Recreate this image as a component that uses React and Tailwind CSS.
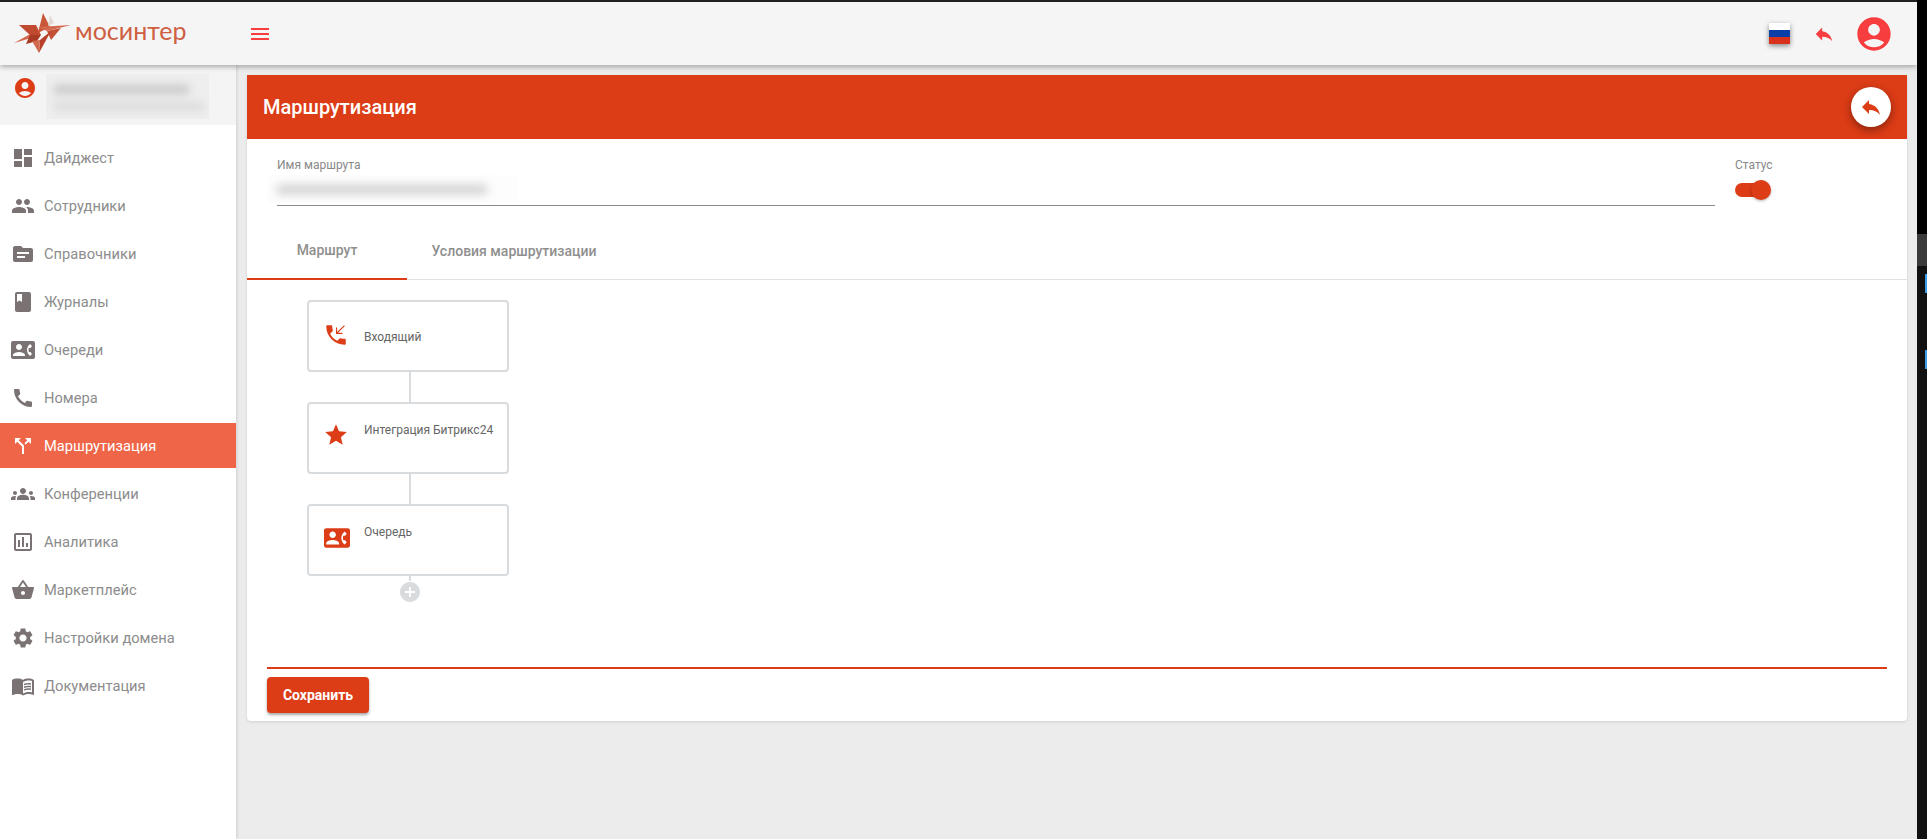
import React from "react";
import {
  MdDashboard, MdPeople, MdTopic, MdBook, MdContactPhone, MdCall, MdCallSplit, MdGroups,
  MdOutlineAssessment, MdShoppingBasket, MdSettings, MdMenuBook, MdAccountCircle, MdReply,
  MdPhoneCallback, MdStar, MdAddCircle, MdMenu,
} from "react-icons/md";

const items = [
  ["Дайджест", MdDashboard],
  ["Сотрудники", MdPeople],
  ["Справочники", MdTopic],
  ["Журналы", MdBook],
  ["Очереди", MdContactPhone],
  ["Номера", MdCall],
  ["Маршрутизация", MdCallSplit, true],
  ["Конференции", MdGroups],
  ["Аналитика", MdOutlineAssessment],
  ["Маркетплейс", MdShoppingBasket],
  ["Настройки домена", MdSettings],
  ["Документация", MdMenuBook],
];

function Logo() {
  return (
    <svg width="58" height="42" viewBox="0 0 58 42" className="shrink-0">
      <polygon points="0,30 20,19 24,23" fill="#d2694c" />
      <polygon points="5,12 22,12 27,22 16,22" fill="#bf4a30" />
      <polygon points="16,22 27,22 23,28 12,31" fill="#a83a24" />
      <polygon points="29,0 36,14 24,20" fill="#c9573a" />
      <polygon points="36,2 34,13 40,10" fill="#e4d8d4" />
      <polygon points="24,14 57,12 33,18" fill="#d2694c" />
      <polygon points="33,18 47,15 37,27" fill="#c44f34" />
      <polygon points="26,27 37,18 25,40" fill="#b8402a" />
      <polygon points="18,28 26,27 25,40" fill="#d2694c" />
    </svg>
  );
}

function Node({ icon, label, textClass, iconBox }) {
  return (
    <div className="w-[202px] h-[72px] border-2 border-[#d9dcdf] rounded-[4px] bg-white flex shrink-0">
      <div className={iconBox}>{icon}</div>
      <div className={"text-[12px] leading-[14px] text-[#666] whitespace-nowrap " + textClass}>{label}</div>
    </div>
  );
}

export default function App() {
  return (
    <div className="w-[1927px] h-[839px] flex overflow-hidden bg-black font-['Roboto',sans-serif]">
      <div className="w-[1917px] h-full flex flex-col bg-[#ececec]">
        <div className="h-[2px] bg-[#222] shrink-0" />
        <header className="h-[63px] shrink-0 bg-[#f5f5f5] flex items-center shadow-[0_2px_5px_rgba(0,0,0,0.3)] z-20">
          <div className="ml-[14px] flex items-center w-[237px]">
            <Logo />
            <span className="ml-[3px] text-[25px] leading-none font-['Lato',sans-serif] text-[#cf5f42] -mt-[6px]">мосинтер</span>
          </div>
          <MdMenu className="text-[#f83d3f] ml-[-3px]" size={24} />
          <div className="ml-auto flex items-center">
            <div className="w-[21px] h-[21px] flex flex-col shadow-[0_2px_5px_rgba(0,0,0,0.45)]">
              <div className="h-[7px] bg-white" />
              <div className="h-[7px] bg-[#0a3fa8]" />
              <div className="h-[7px] bg-[#d9301c]" />
            </div>
            <MdReply className="text-[#f83d3f] ml-[23px]" size={22} />
            <MdAccountCircle className="text-[#f83d3f] ml-[19px] mr-[23px]" size={40} />
          </div>
        </header>
        <div className="flex-1 flex min-h-0">
          <aside className="w-[236px] shrink-0 bg-white shadow-[1px_0_3px_rgba(0,0,0,0.12)] z-10">
            <div className="h-[60px] bg-[#f4f4f4] flex items-start">
              <MdAccountCircle className="text-[#dc3c16] ml-[13px] mt-[11px]" size={24} />
              <div className="ml-[9px] mt-[9px] w-[163px] h-[45px] bg-[#eeeeee] overflow-hidden pl-[8px] pt-[11px]">
                <div className="w-[135px] h-[9px] bg-[#c8c8c8] blur-[4px]" />
                <div className="mt-[9px] w-[150px] h-[7px] bg-[#d8d8d8] blur-[4px]" />
              </div>
            </div>
            <nav className="pt-[10px]">
              {items.map(([label, Icon, active]) => (
                <div
                  key={label}
                  className={
                    "h-[45px] mb-[3px] flex items-center " +
                    (active ? "bg-[#ee6548] text-white" : "text-[#8c8c8c]")
                  }
                >
                  <div className={"w-[44px] flex justify-center pl-[2px] " + (active ? "text-white" : "text-[#7b7373]")}>
                    <Icon size={24} />
                  </div>
                  <span className="text-[14.7px] mt-[2px]">{label}</span>
                </div>
              ))}
            </nav>
          </aside>
          <main className="flex-1 pl-[11px] pr-[10px] pt-[10px]">
            <div className="w-[1660px] h-[646px] bg-white rounded-b-[4px] shadow-[0_1px_3px_rgba(0,0,0,0.12)] flex flex-col">
              <div className="h-[64px] shrink-0 bg-[#dc3c16] flex items-center justify-between pl-[16px] pr-[16px]">
                <h1 className="text-[20px] font-medium text-white">Маршрутизация</h1>
                <div className="w-[40px] h-[40px] rounded-full bg-white flex items-center justify-center shadow-[0_3px_8px_rgba(0,0,0,0.4)]">
                  <MdReply className="text-[#dc3c16]" size={24} />
                </div>
              </div>
              <div className="h-[75px] shrink-0 flex pl-[30px]">
                <div className="w-[1438px] h-[67px] border-b border-[#8a8a8a] pt-[19px]">
                  <div className="text-[12px] leading-[14px] text-[#888]">Имя маршрута</div>
                  <div className="mt-[3px] ml-[-9px] w-[250px] h-[28px] flex items-center bg-[#fdfdfd]">
                    <div className="ml-[9px] w-[210px] h-[9px] bg-[#cfcfcf] blur-[5px]" />
                  </div>
                </div>
                <div className="ml-[20px] pt-[19px]">
                  <div className="text-[12px] leading-[14px] text-[#888]">Статус</div>
                  <div className="mt-[8px] flex items-center h-[20px]">
                    <div className="w-[32px] h-[14px] rounded-full bg-[#dc3c16]" />
                    <div className="w-[20px] h-[20px] rounded-full bg-[#dc3c16] ml-[-16px] shadow-[0_1px_3px_rgba(0,0,0,0.3)]" />
                  </div>
                </div>
              </div>
              <div className="h-[66px] shrink-0 flex border-b border-[#e2e2e2] items-end">
                <div className="w-[160px] h-[66px] pt-[8px] flex items-center justify-center text-[14px] font-medium text-[#8f8f8f] border-b-2 border-[#dc3c16] mb-[-1px]">Маршрут</div>
                <div className="px-[24.5px] h-[65px] pt-[10px] flex items-center text-[14px] font-medium text-[#8f8f8f]">Условия маршрутизации</div>
              </div>
              <div className="flex-1 pl-[60px] pt-[20px] flex flex-col items-start">
                <Node
                  iconBox="w-[55px] pl-[14px] pt-[20px]"
                  icon={<MdPhoneCallback className="text-[#dc3c16]" size={26} />}
                  textClass="mt-[28px]"
                  label="Входящий"
                />
                <div className="w-[2px] h-[30px] bg-[#d9dcdf] ml-[102px]" />
                <Node
                  iconBox="w-[55px] pl-[14px] pt-[18px]"
                  icon={<MdStar className="text-[#dc3c16]" size={26} />}
                  textClass="mt-[19px]"
                  label="Интеграция Битрикс24"
                />
                <div className="w-[2px] h-[30px] bg-[#d9dcdf] ml-[102px]" />
                <Node
                  iconBox="w-[55px] pl-[15px] pt-[19px]"
                  icon={<MdContactPhone className="text-[#dc3c16]" size={26} />}
                  textClass="mt-[19px]"
                  label="Очередь"
                />
                <div className="w-[2px] h-[5px] bg-[#d9dcdf] ml-[102px]" />
                <MdAddCircle className="text-[#d9dcdf] ml-[91px] -mt-[1px]" size={24} />
              </div>
              <div className="mx-[20px] shrink-0 border-t-2 border-[#dc3c16] pt-[8px] pb-[8px]">
                <button className="w-[102px] h-[36px] rounded-[4px] bg-[#dc3c16] text-white text-[14px] font-bold shadow-[0_2px_3px_rgba(0,0,0,0.35)]">Сохранить</button>
              </div>
            </div>
          </main>
        </div>
      </div>
      <div className="w-[10px] h-full flex flex-col bg-[#111]">
        <div className="h-[234px] bg-black" />
        <div className="h-[32px] bg-[#3a3a3a]" />
        <div className="h-[8px]" />
        <div className="h-[19px] w-[2px] ml-[8px] bg-[#3a9be8]" />
        <div className="h-[57px]" />
        <div className="h-[19px] w-[2px] ml-[8px] bg-[#3a9be8]" />
      </div>
    </div>
  );
}
